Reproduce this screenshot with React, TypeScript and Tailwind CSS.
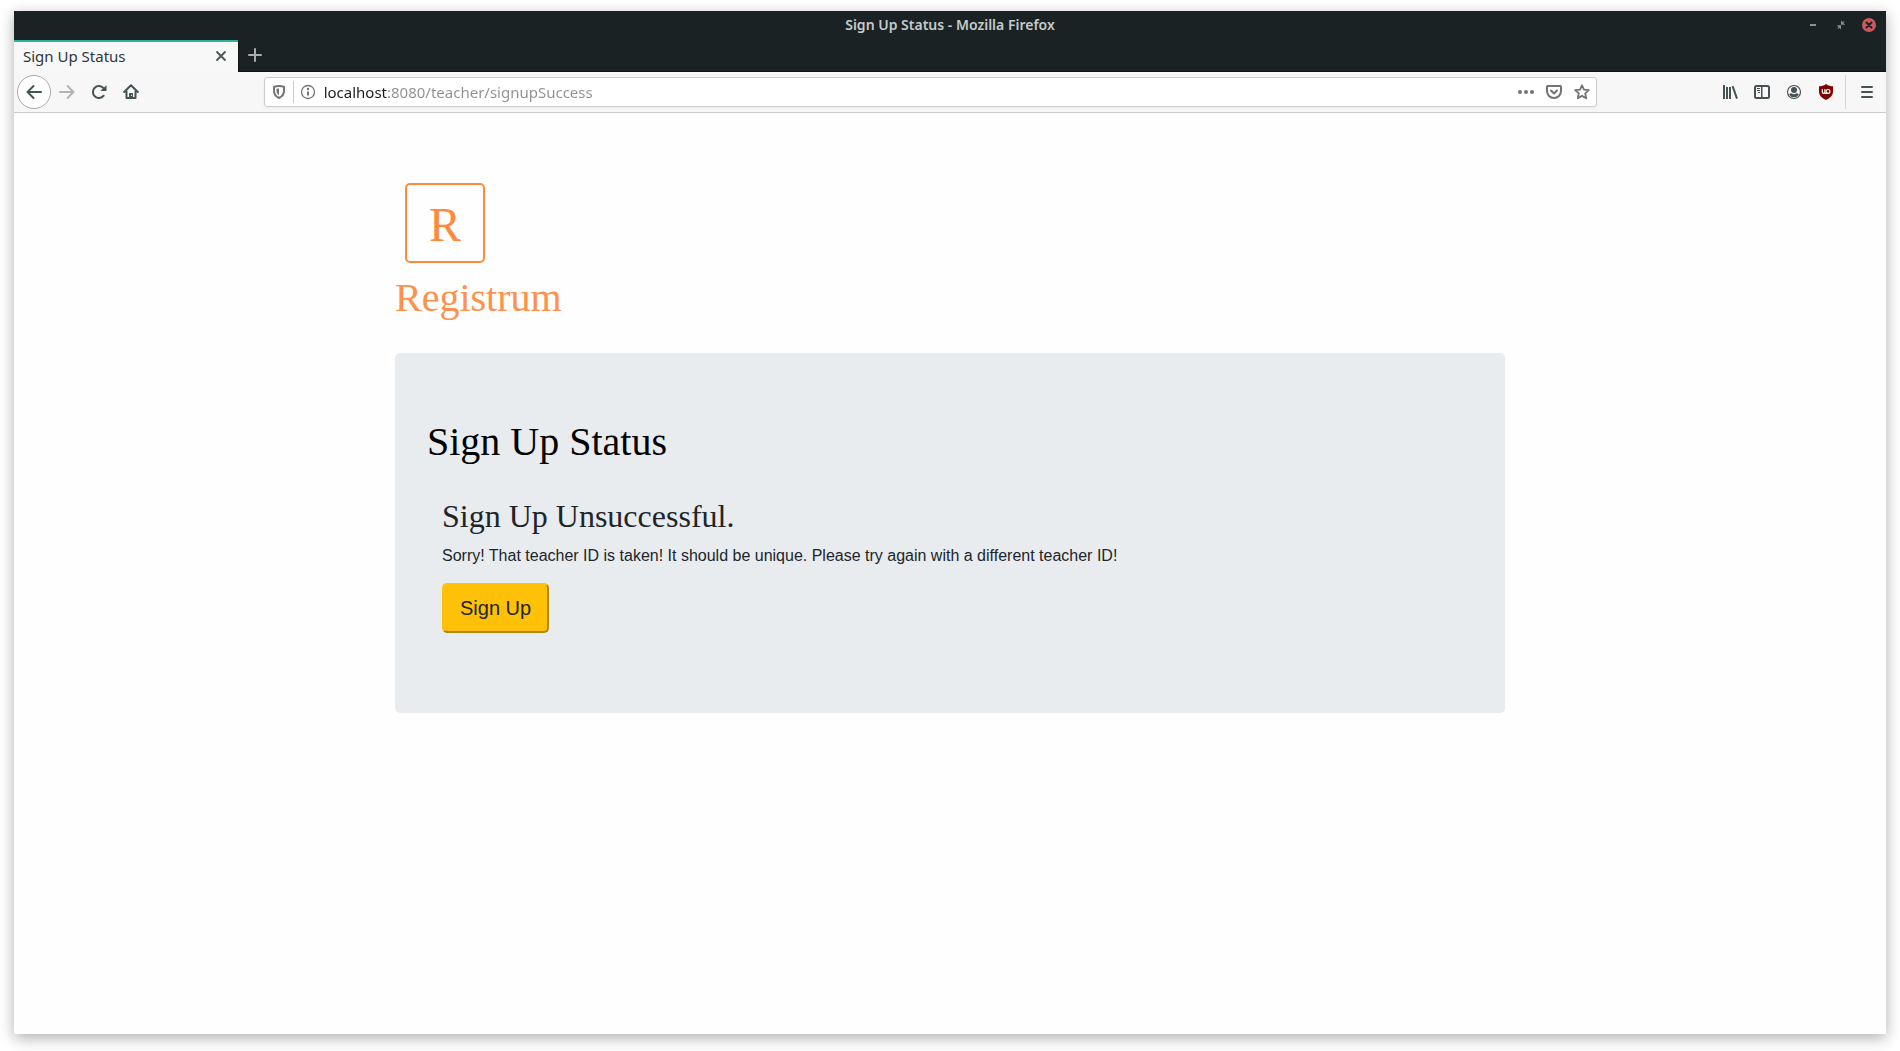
import React from 'react';

type IconProps = { children: React.ReactNode; className?: string };

function Icon({ children, className = 'size-4' }: IconProps) {
  return (
    <svg viewBox="0 0 16 16" className={className} fill="none" stroke="currentColor" strokeWidth="2" strokeLinecap="round" strokeLinejoin="round" aria-hidden="true">
      {children}
    </svg>
  );
}

function ToolButton({ label, children, className = 'w-8' }: { label: string; children: React.ReactNode; className?: string }) {
  return (
    <button type="button" aria-label={label} className={`flex h-8 shrink-0 items-center justify-center ${className}`}>
      {children}
    </button>
  );
}

function TitleBar() {
  return (
    <header className="grid h-[29px] grid-cols-[1fr_auto_1fr] items-center bg-[#1b2224] pb-0.5">
      <div />
      <h1 className="text-[14px] leading-5 font-semibold text-[#c4cbcb]">Sign Up Status - Mozilla Firefox</h1>
      <div className="flex items-center justify-end pr-[3px]">
        <button type="button" aria-label="Minimize" className="flex w-7 justify-center text-[#8b9191]">
          <svg viewBox="0 0 14 14" className="size-3.5" fill="currentColor"><path d="M4 6h6v2H4z" /></svg>
        </button>
        <button type="button" aria-label="Restore" className="flex w-7 justify-center text-[#8b9191]">
          <svg viewBox="0 0 14 14" className="size-3.5" fill="currentColor"><path d="M7 2.500l1.800 1.800L10 3l.6.600-1.300 1.300 1.900 1.900H7zM2.800 7.200H7v4.300L5.300 9.800 4 11l-.6-.600 1.200-1.300z" /></svg>
        </button>
        <button type="button" aria-label="Close window" className="flex w-7 justify-center">
          <svg viewBox="0 0 14 14" className="size-3.5"><circle cx="7" cy="7" r="7" fill="#cc575d" /><path d="M4.500 4.500l5 5m0-5l-5 5" stroke="#1b2224" strokeWidth="2" strokeLinecap="round" /></svg>
        </button>
      </div>
    </header>
  );
}

function TabStrip() {
  return (
    <div className="flex h-8 bg-[#1b2224]">
      <div className="flex w-56 items-center justify-between border-t-2 border-[#2eb398] bg-[#f8f8f8] pr-2 pb-0.5 pl-[9px]">
        <span className="text-[15px] leading-5 text-[#2d3638]">Sign Up Status</span>
        <button type="button" aria-label="Close tab" className="text-[#4b5557]">
          <svg viewBox="0 0 18 18" className="size-[18px]" stroke="currentColor" strokeWidth="1.800" strokeLinecap="round"><path d="M5 5l8 8m0-8l-8 8" /></svg>
        </button>
      </div>
      <button type="button" aria-label="New tab" className="flex w-8 items-center justify-center border-b border-l border-[#0e1212] pb-px text-[#a9afaf]">
        <svg viewBox="0 0 16 16" className="size-4" stroke="currentColor" strokeWidth="2" strokeLinecap="round"><path d="M8 2v12M2 8h12" /></svg>
      </button>
      <div className="flex-1 border-b border-[#0e1212]" />
    </div>
  );
}

function AddressBar() {
  return (
    <div className="flex h-[30px] min-w-0 flex-1 items-center rounded-[3px] border border-[#cdcdcd] bg-white text-[#737373] shadow-[0_1px_3px_rgba(0,0,0,0.06)]">
      <ToolButton label="Tracking protection" className="w-7">
        <Icon>
          <path d="M8 2C6 2 4.300 2.300 3 2.900V7c0 3 2 5.500 5 7 3-1.500 5-4 5-7V2.900C11.700 2.300 10 2 8 2z" />
          <path d="M8 4.600C7 4.600 6.200 4.700 5.500 5v2c0 1.900 1 3.400 2.500 4.500z" fill="currentColor" stroke="none" />
        </Icon>
      </ToolButton>
      <span className="h-[22px] w-px bg-[#cdcdcd]" />
      <ToolButton label="Site information" className="w-7">
        <Icon>
          <circle cx="8" cy="8" r="6.500" strokeWidth="1.300" />
          <path d="M8 7.500v4" strokeLinecap="butt" />
          <circle cx="8" cy="5" r="1.200" fill="currentColor" stroke="none" />
        </Icon>
      </ToolButton>
      <input
        aria-label="Address"
        defaultValue="localhost:8080/teacher/signupSuccess"
        spellCheck={false}
        className="ml-0.5 h-6 min-w-0 flex-1 bg-[linear-gradient(to_right,#1c1c1d_63px,#8f8f8f_63px)] bg-clip-text text-[15px] leading-6 text-transparent caret-black outline-none"
      />
      <div className="flex">
        <ToolButton label="Page actions" className="w-7">
          <Icon><g fill="currentColor" stroke="none"><circle cx="2" cy="8" r="2" /><circle cx="8" cy="8" r="2" /><circle cx="14" cy="8" r="2" /></g></Icon>
        </ToolButton>
        <ToolButton label="Save to Pocket" className="w-7">
          <Icon>
            <path d="M1.500 2h13a.5.5 0 0 1 .5.500V7a7 7 0 0 1-14 0V2.500a.5.5 0 0 1 .5-.5z" />
            <path d="M5 6.500l3 3 3-3" />
          </Icon>
        </ToolButton>
        <ToolButton label="Bookmark this page" className="w-7">
          <Icon><path d="M8 1.300l2 4.400 4.800.5-3.600 3.200 1 4.900L8 11.900l-4.200 2.400 1-4.900L1.200 6.200 6 5.700z" strokeWidth="1.800" /></Icon>
        </ToolButton>
      </div>
    </div>
  );
}

function Toolbar() {
  return (
    <nav aria-label="Browser toolbar" className="flex h-[41px] items-center border-b border-[#ccc] bg-[#f7f7f7] px-[3px] text-[#475254]">
      <button type="button" aria-label="Back" className="flex size-[34px] shrink-0 items-center justify-center rounded-full border border-[#a9a9a9] bg-white">
        <Icon><path d="M15 8H1.500M7.500 2L1.500 8l6 6" /></Icon>
      </button>
      <ToolButton label="Forward" className="w-8 text-[#b1b5b5]">
        <Icon><path d="M1 8h13.500M8.500 2l6 6-6 6" /></Icon>
      </ToolButton>
      <ToolButton label="Reload">
        <Icon>
          <path d="M12.700 11.700A6 6 0 1 1 12.500 4.200" />
          <path d="M15.500 1.300v5.200a.5.500 0 0 1-.5.500H9.300z" fill="currentColor" stroke="none" />
        </Icon>
      </ToolButton>
      <ToolButton label="Home">
        <Icon>
          <path d="M1.200 8L8 1.300 14.800 8M3.500 7.500V14h9V7.500" />
          <path d="M6 14V9.500a.5.500 0 0 1 .5-.5h3a.5.500 0 0 1 .5.500V14z" fill="currentColor" stroke="none" />
          <path d="M8.300 11.300h.4" stroke="#fff" strokeWidth="1" />
        </Icon>
      </ToolButton>
      <div className="w-[6.25%]" />
      <AddressBar />
      <div className="w-[6.25%]" />
      <ToolButton label="Library">
        <Icon><path d="M2 1v14M5 3v12M8 3v12M10.600 2.200L15 14.700" strokeLinecap="butt" /></Icon>
      </ToolButton>
      <ToolButton label="Sidebars">
        <Icon>
          <rect x="1" y="2" width="14" height="12" rx="1.500" />
          <path d="M7.750 2v12" strokeWidth="1.500" strokeLinecap="butt" />
          <path d="M3 4.500h3M3 6.500h3M4 8.500h2" strokeWidth="1" strokeLinecap="butt" />
        </Icon>
      </ToolButton>
      <ToolButton label="Account">
        <Icon>
          <circle cx="8" cy="8" r="6.500" strokeWidth="1.200" />
          <circle cx="8" cy="6" r="3" fill="currentColor" stroke="none" />
          <path d="M3.200 10.500C4 9.500 5 9.300 5.500 9.300c1.500 1.200 3.500 1.200 5 0 .5 0 1.500.2 2.300 1.200A5.300 5.300 0 0 1 8 13.200a5.300 5.300 0 0 1-4.800-2.700z" fill="currentColor" stroke="none" />
        </Icon>
      </ToolButton>
      <ToolButton label="uBlock Origin">
        <Icon>
          <path d="M8 0c2.500 2 4.500 2.200 7 2.200V7c0 5-3 7-7 9-4-2-7-4-7-9V2.200C3.500 2.200 5.500 2 8 0z" fill="#800000" stroke="none" />
          <path d="M4.300 5.500V8a1.300 1.300 0 0 0 2.600 0V5.500M7 9.300h2.900" stroke="#fff" strokeWidth="1.200" />
          <circle cx="10" cy="7.400" r="1.900" stroke="#fff" strokeWidth="1.200" />
        </Icon>
      </ToolButton>
      <span className="ml-[3px] h-[34px] w-px bg-[#d4d4d4]" />
      <ToolButton label="Menu" className="ml-[5px] w-8">
        <Icon><path d="M3 3h10M3 8h10M3 13h10" /></Icon>
      </ToolButton>
    </nav>
  );
}

function Page() {
  return (
    <main className="mx-auto w-full max-w-[1140px] px-[15px] pt-[70px] pb-8 font-['Liberation_Sans',Arial,sans-serif] text-[#212529]">
      <div className="ml-2.5 flex size-20 items-center justify-center rounded-[5px] border-2 border-[#ff8a3c] pt-1 font-['Liberation_Serif',serif] text-[48px] leading-none text-[#ff8a3c]">
        R
      </div>
      <p className="mt-[11px] font-['Liberation_Serif',serif] text-[40px] leading-[48px] text-[#ff914d]">Registrum</p>
      <section className="mt-[31px] rounded-[5px] bg-[#e8ecef] px-8 py-16">
        <h2 className="font-['Liberation_Serif',serif] text-[40px] leading-[50px] text-black">Sign Up Status</h2>
        <div className="px-[15px] pt-[30px] pb-4">
          <h3 className="font-['Liberation_Serif',serif] text-[32px] leading-[38px]">Sign Up Unsuccessful.</h3>
          <p className="mt-[9px] mb-[15px] text-base leading-6">
            Sorry! That teacher ID is taken! It should be unique. Please try again with a different teacher ID!
          </p>
          <button type="button" className="block rounded-[5px] border-2 border-t-[#ffc107] border-r-[#b28705] border-b-[#b28705] border-l-[#ffc107] bg-[#ffc107] px-4 py-2 text-xl leading-[30px]">
            Sign Up
          </button>
        </div>
      </section>
    </main>
  );
}

export default function App() {
  return (
    <div className="flex min-h-screen flex-col bg-white px-3.5 pt-[11px] pb-[17px] font-['Noto_Sans',sans-serif]">
      <div className="flex flex-1 flex-col bg-[#fefefe] shadow-[0_4px_14px_rgba(0,0,0,0.32)]">
        <TitleBar />
        <TabStrip />
        <Toolbar />
        <Page />
      </div>
    </div>
  );
}
